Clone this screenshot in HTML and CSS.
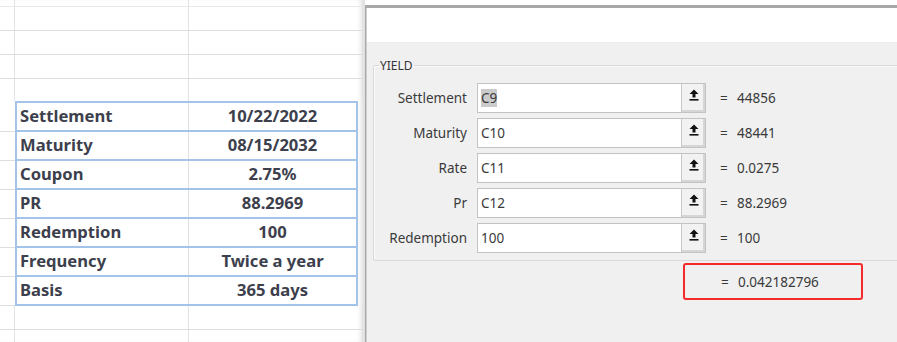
FILE: index.html
```html
<!DOCTYPE html>
<html lang="en">
<head>
  <meta charset="utf-8" />
  <meta name="viewport" content="width=device-width, initial-scale=1.0" />
  <title>YIELD function arguments</title>
  <link rel="stylesheet" href="styles.css">
</head>
<body>

  <div class="screen">

    <div class="sheet">
      <div class="grid-row r-first"><span class="c-a"></span><span class="c-b"></span><span class="c-c"></span></div>
      <div class="grid-row"><span class="c-a"></span><span class="c-b"></span><span class="c-c"></span></div>
      <div class="grid-row"><span class="c-a"></span><span class="c-b"></span><span class="c-c"></span></div>
      <div class="grid-row"><span class="c-a"></span><span class="c-b"></span><span class="c-c"></span></div>
      <div class="grid-row r-last"><span class="c-a"></span><span class="c-b"></span><span class="c-c"></span></div>

      <div class="data-area">
        <div class="gutter">
          <span></span><span></span><span></span><span></span><span></span><span></span><span></span>
        </div>
        <div class="data-table">
          <div class="data-row"><span class="d-label">Settlement</span><span class="d-value">10/22/2022</span></div>
          <div class="data-row"><span class="d-label">Maturity</span><span class="d-value">08/15/2032</span></div>
          <div class="data-row"><span class="d-label">Coupon</span><span class="d-value">2.75%</span></div>
          <div class="data-row"><span class="d-label">PR</span><span class="d-value">88.2969</span></div>
          <div class="data-row"><span class="d-label">Redemption</span><span class="d-value">100</span></div>
          <div class="data-row"><span class="d-label">Frequency</span><span class="d-value">Twice a year</span></div>
          <div class="data-row"><span class="d-label">Basis</span><span class="d-value">365 days</span></div>
        </div>
        <div class="data-edge"></div>
      </div>

      <div class="grid-row"><span class="c-a"></span><span class="c-b"></span><span class="c-c"></span></div>
      <div class="grid-row"><span class="c-a"></span><span class="c-b"></span><span class="c-c"></span></div>
    </div>

    <div class="dialog">
      <div class="title-bar"></div>
      <div class="dialog-body">
        <fieldset class="group">
          <legend>YIELD</legend>

          <div class="arg-row">
            <label>Settlement</label>
            <div class="ref-box">
              <span class="ref-input"><span class="sel">C9</span></span>
              <span class="ref-btn"><svg width="10" height="12" viewBox="0 0 10 12"><path d="M5 0.5 L9.5 5 H6.5 V8.5 H3.5 V5 H0.5 Z" fill="#111"/><rect x="0.5" y="10" width="9" height="1.6" fill="#111"/></svg></span>
            </div>
            <span class="eq">=</span>
            <span class="arg-val">44856</span>
          </div>

          <div class="arg-row">
            <label>Maturity</label>
            <div class="ref-box">
              <span class="ref-input">C10</span>
              <span class="ref-btn"><svg width="10" height="12" viewBox="0 0 10 12"><path d="M5 0.5 L9.5 5 H6.5 V8.5 H3.5 V5 H0.5 Z" fill="#111"/><rect x="0.5" y="10" width="9" height="1.6" fill="#111"/></svg></span>
            </div>
            <span class="eq">=</span>
            <span class="arg-val">48441</span>
          </div>

          <div class="arg-row">
            <label>Rate</label>
            <div class="ref-box">
              <span class="ref-input">C11</span>
              <span class="ref-btn"><svg width="10" height="12" viewBox="0 0 10 12"><path d="M5 0.5 L9.5 5 H6.5 V8.5 H3.5 V5 H0.5 Z" fill="#111"/><rect x="0.5" y="10" width="9" height="1.6" fill="#111"/></svg></span>
            </div>
            <span class="eq">=</span>
            <span class="arg-val">0.0275</span>
          </div>

          <div class="arg-row">
            <label>Pr</label>
            <div class="ref-box">
              <span class="ref-input">C12</span>
              <span class="ref-btn"><svg width="10" height="12" viewBox="0 0 10 12"><path d="M5 0.5 L9.5 5 H6.5 V8.5 H3.5 V5 H0.5 Z" fill="#111"/><rect x="0.5" y="10" width="9" height="1.6" fill="#111"/></svg></span>
            </div>
            <span class="eq">=</span>
            <span class="arg-val">88.2969</span>
          </div>

          <div class="arg-row">
            <label>Redemption</label>
            <div class="ref-box">
              <span class="ref-input">100</span>
              <span class="ref-btn"><svg width="10" height="12" viewBox="0 0 10 12"><path d="M5 0.5 L9.5 5 H6.5 V8.5 H3.5 V5 H0.5 Z" fill="#111"/><rect x="0.5" y="10" width="9" height="1.6" fill="#111"/></svg></span>
            </div>
            <span class="eq">=</span>
            <span class="arg-val">100</span>
          </div>
        </fieldset>

        <div class="result">
          <span class="eq">=</span>
          <span class="arg-val">0.042182796</span>
        </div>
      </div>
    </div>

  </div>

</body>
</html>
```

FILE: styles.css
```css
body {
  margin: 0;
  background: #fff;
  overflow: hidden;
}

.screen {
  display: flex;
  width: 897px;
  height: 342px;
  overflow: hidden;
}

/* spreadsheet on the left */

.sheet {
  width: 365px;
  flex-shrink: 0;
  background: #fff;
  box-shadow: inset -7px 0 6px -4px #d8d8d8;
}

.grid-row {
  display: flex;
  height: 24px;
  box-sizing: border-box;
}

.grid-row span {
  box-sizing: border-box;
  border-bottom: 1px solid #dedede;
  border-right: 1px solid #e2e2e2;
}

.grid-row.r-first {
  height: 7px;
}

.grid-row.r-first span {
  border-bottom-color: #e8e8e8;
}

.grid-row.r-last {
  height: 22px;
}

.grid-row.r-last span {
  border-bottom: none;
}

.c-a {
  width: 15px;
}

.c-b {
  width: 174px;
}

.c-c {
  width: 174px;
}

.data-area {
  display: flex;
}

.gutter {
  width: 15px;
  padding-top: 2px;
  display: flex;
  flex-direction: column;
}

.gutter span {
  height: 29px;
  box-sizing: border-box;
  border-bottom: 1px solid #dedede;
}

.data-table {
  width: 343px;
  box-sizing: border-box;
  border: 2px solid #a3c4e8;
  border-bottom: none;
}

.data-row {
  display: flex;
  height: 29px;
  box-sizing: border-box;
  border-bottom: 2px solid #a3c4e8;
  font-family: "Noto Sans", "Open Sans", sans-serif;
  font-weight: 700;
  font-size: 16.6px;
  color: #3d3f4d;
}

.d-label {
  width: 172px;
  box-sizing: border-box;
  padding-left: 3px;
  border-right: 1px solid #e0e0e0;
  line-height: 26px;
}

.d-value {
  flex: 1;
  text-align: center;
  line-height: 26px;
}

.data-edge {
  flex: 1;
}

/* function arguments dialog */

.dialog {
  width: 560px;
  flex-shrink: 0;
  margin-top: 5px;
  border-left: 1px solid #a8a8a8;
  border-top: 3px solid #a8a8a8;
  box-shadow: inset 1px 0 0 #d0d0d0;
  background: #f0f0f0;
  font-family: "Noto Sans", "Open Sans", sans-serif;
  font-size: 13.5px;
  color: #3a3a3a;
}

.title-bar {
  height: 34px;
  margin-left: 1px;
  background: #fff;
  border-bottom: 1px solid #ececec;
}

.dialog-body {
  padding: 14px 0 0 7px;
}

.group {
  margin: 0;
  padding: 9px 0 7px 0;
  border: 1px solid #d9d9d9;
  border-radius: 2px;
  box-shadow: inset 1px 1px 0 #fafafa;
}

.group legend {
  padding: 0 1px;
  margin-left: 5px;
  font-size: 12px;
  color: #333;
}

.arg-row {
  display: flex;
  align-items: center;
  height: 30px;
  margin-bottom: 5px;
}

.arg-row:last-child {
  margin-bottom: 0;
}

.arg-row label {
  width: 93px;
  text-align: right;
  margin-right: 10px;
}

.ref-box {
  display: flex;
  width: 229px;
  height: 30px;
  box-sizing: border-box;
  border: 1px solid #c3c3c3;
  background: #fff;
}

.ref-input {
  flex: 1;
  padding-left: 3px;
  line-height: 28px;
}

.sel {
  background: #cbcbcb;
}

.ref-btn {
  width: 24px;
  display: flex;
  justify-content: center;
  padding-top: 5px;
  box-sizing: border-box;
  background: #f2f2f2;
  border-left: 1px solid #c8c8c8;
  box-shadow: inset 0 -2px 0 #d6d6d6, inset -2px 0 0 #d6d6d6;
}

.eq {
  margin-left: 14px;
  width: 8px;
}

.arg-val {
  margin-left: 9px;
}

.result {
  display: flex;
  align-items: center;
  width: 180px;
  height: 37px;
  box-sizing: border-box;
  margin: 2px 0 0 310px;
  border: 2px solid #f52b2b;
  border-radius: 3px;
}

.result .eq {
  margin-left: 36px;
}
```
